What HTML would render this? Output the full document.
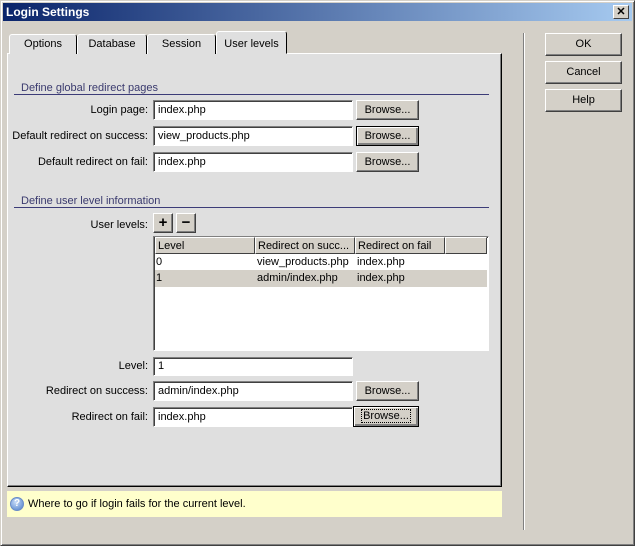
<!DOCTYPE html>
<html><head><meta charset="utf-8"><style>
*{box-sizing:border-box;margin:0;padding:0}
body{width:635px;height:546px;background:#d4d0c8;font-family:"Liberation Sans",sans-serif;font-size:11px;color:#000;position:relative;overflow:hidden}
.a{position:absolute;white-space:nowrap}
.win{left:0;top:0;width:635px;height:546px;border:1px solid;border-color:#d4d0c8 #404040 #404040 #d4d0c8;box-shadow:inset 1px 1px #fff,inset -1px -1px #808080}
.title{left:3px;top:3px;width:629px;height:18px;background:linear-gradient(90deg,#0a246a,#a6caf0);color:#fff;font-weight:bold;font-size:12px;padding:2px 3px}
.close{left:613px;top:5px;width:16px;height:14px;background:#d4d0c8;border:1px solid;border-color:#fff #404040 #404040 #fff;font-size:11px;font-weight:bold;text-align:center;line-height:12px}
.panel{left:7px;top:53px;width:495px;height:434px;background:#dfdfdf;border:1px solid;border-color:#fff #000 #000 #fff;box-shadow:inset -1px -1px #808080}
.tab{top:34px;height:20px;background:#dfdfdf;border:1px solid;border-bottom:none;border-color:#fff #000 #000 #fff;border-radius:3px 3px 0 0;text-align:center;line-height:18px;font-size:11px}
.inp{height:20px;background:#fff;border:1px solid;border-color:#808080 #fff #fff #808080;box-shadow:inset 1px 1px #404040;padding:3px 4px;font-size:11px}
.btn{background:#d4d0c8;border:1px solid;border-color:#fff #404040 #404040 #fff;box-shadow:inset -1px -1px #808080;text-align:center;font-size:11px}
.def{border:1px solid #000;box-shadow:inset 1px 1px #fff,inset -2px -2px #808080}
.lbl{text-align:right;width:148px;left:0;font-size:11px}
.hd{color:#3a3a6e;font-size:11px}
.line{height:1px;background:#3c3c78}
.col{top:237px;height:17px;background:#d4d0c8;border:1px solid;border-color:#fff #404040 #404040 #fff;padding:2px 2px;font-size:11px;overflow:hidden}
.cell{font-size:11px}
</style></head><body>
<div class="a win"></div>
<div class="a title">Login Settings</div>
<div class="a close">✕</div>

<div class="a panel"></div>
<div class="a tab" style="left:9px;width:68px">Options</div>
<div class="a tab" style="left:77px;width:70px">Database</div>
<div class="a tab" style="left:147px;width:69px">Session</div>
<div class="a tab" style="left:216px;top:31px;height:23px;width:71px;line-height:24px;border-bottom:1px solid #dfdfdf">User levels</div>

<div class="a hd" style="left:21px;top:82px">Define global redirect pages</div>
<div class="a line" style="left:14px;top:94px;width:475px"></div>

<div class="a lbl" style="top:104px">Login page:</div>
<div class="a inp" style="left:153px;top:100px;width:200px">index.php</div>
<div class="a btn" style="left:356px;top:100px;width:63px;height:20px;line-height:18px">Browse...</div>

<div class="a lbl" style="top:130px">Default redirect on success:</div>
<div class="a inp" style="left:153px;top:126px;width:200px">view_products.php</div>
<div class="a btn def" style="left:356px;top:126px;width:63px;height:20px;line-height:18px">Browse...</div>

<div class="a lbl" style="top:156px">Default redirect on fail:</div>
<div class="a inp" style="left:153px;top:152px;width:200px">index.php</div>
<div class="a btn" style="left:356px;top:152px;width:63px;height:20px;line-height:18px">Browse...</div>

<div class="a hd" style="left:21px;top:195px">Define user level information</div>
<div class="a line" style="left:14px;top:207px;width:475px"></div>

<div class="a lbl" style="top:219px">User levels:</div>
<div class="a btn" style="left:153px;top:213px;width:20px;height:20px;font-weight:bold;font-size:15px;line-height:17px">+</div>
<div class="a btn" style="left:176px;top:213px;width:20px;height:20px;font-weight:bold;font-size:15px;line-height:17px">−</div>

<div class="a" style="left:153px;top:236px;width:336px;height:115px;background:#fff;border:1px solid;border-color:#808080 #fff #fff #808080;box-shadow:inset 1px 1px #404040"></div>
<div class="a col" style="left:155px;width:100px">Level</div>
<div class="a col" style="left:255px;width:100px">Redirect on succ...</div>
<div class="a col" style="left:355px;width:90px">Redirect on fail</div>
<div class="a col" style="left:445px;width:42px"></div>
<div class="a cell" style="left:156px;top:256px">0</div>
<div class="a cell" style="left:257px;top:256px">view_products.php</div>
<div class="a cell" style="left:357px;top:256px">index.php</div>
<div class="a" style="left:155px;top:270px;width:332px;height:17px;background:#d4d0c8"></div>
<div class="a cell" style="left:156px;top:272px">1</div>
<div class="a cell" style="left:257px;top:272px">admin/index.php</div>
<div class="a cell" style="left:357px;top:272px">index.php</div>

<div class="a lbl" style="top:360px">Level:</div>
<div class="a inp" style="left:153px;top:357px;width:200px;height:19px;padding-top:2px">1</div>

<div class="a lbl" style="top:385px">Redirect on success:</div>
<div class="a inp" style="left:153px;top:381px;width:200px">admin/index.php</div>
<div class="a btn" style="left:356px;top:381px;width:63px;height:20px;line-height:18px">Browse...</div>

<div class="a lbl" style="top:411px">Redirect on fail:</div>
<div class="a inp" style="left:153px;top:407px;width:200px">index.php</div>
<div class="a btn def" style="left:353px;top:406px;width:66px;height:21px;line-height:18px"><span style="outline:1px dotted #000;padding:0 1px">Browse...</span></div>

<div class="a" style="left:7px;top:491px;width:495px;height:26px;background:#ffffcc"></div>
<div class="a" style="left:10px;top:497px;width:14px;height:14px;border-radius:50%;background:radial-gradient(circle at 40% 35%,#c8dcf8,#4a7cc8);color:#fff;font-weight:bold;font-size:10px;text-align:center;line-height:12px;border:1px solid #6a8cc8">?</div>
<div class="a" style="left:28px;top:498px;font-size:11px">Where to go if login fails for the current level.</div>

<div class="a" style="left:523px;top:33px;width:2px;height:497px;border-left:1px solid #808080;border-right:1px solid #fff"></div>
<div class="a btn" style="left:545px;top:33px;width:77px;height:23px;line-height:21px">OK</div>
<div class="a btn" style="left:545px;top:61px;width:77px;height:23px;line-height:21px">Cancel</div>
<div class="a btn" style="left:545px;top:89px;width:77px;height:23px;line-height:21px">Help</div>
</body></html>
